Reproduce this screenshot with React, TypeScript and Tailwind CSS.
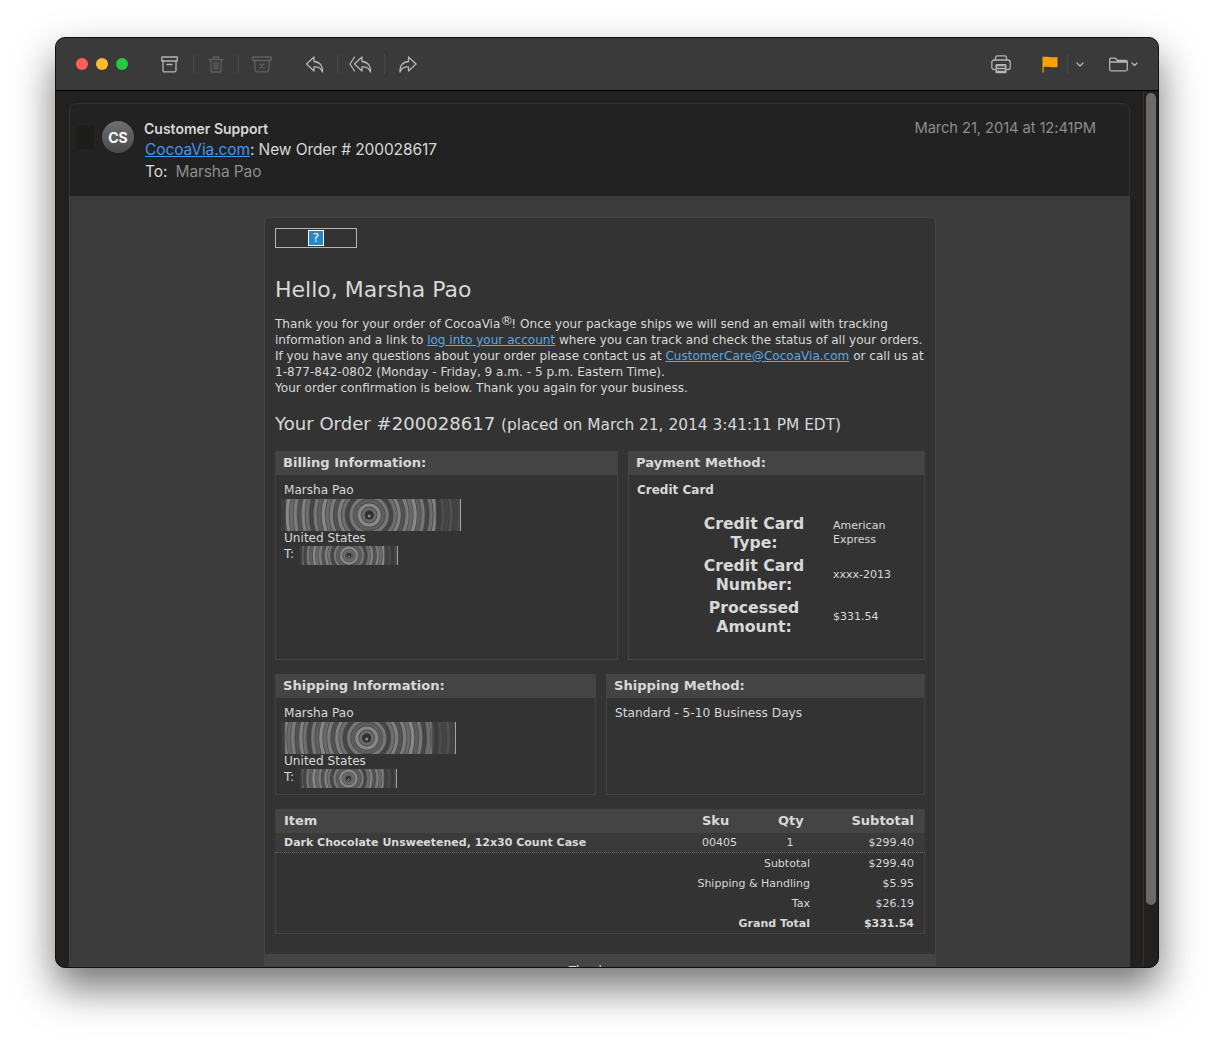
import type { ReactNode } from "react";

const Sep = ({ ml }: { ml: string }) => <div className={`h-5 w-px bg-[#4a4a4a] ${ml}`} />;

function Icon({ w, h, className, children }: { w: number; h: number; className: string; children: ReactNode }) {
  return (
    <svg width={w} height={h} viewBox={`0 0 ${w} ${h}`} fill="none" stroke="currentColor" strokeWidth="1.3" strokeLinejoin="round" strokeLinecap="round" className={className}>
      {children}
    </svg>
  );
}

const ReplyPath = "M9 1 L1.5 8 L9 15 V11 C13 10.5 16 12 17.5 16 C18 10 15 6 9 5.5 Z";
const ForwardPath = "M9.5 1 L17 8 L9.5 15 V11 C5.5 10.5 2.5 12 1 16 C0.5 10 3.5 6 9.5 5.5 Z";

function Toolbar() {
  return (
    <div className="flex h-[53px] shrink-0 items-center border-b border-black bg-[#3a3a3a] pl-5 text-[#b5b5b5]">
      <div className="flex gap-2">
        <div className="h-3 w-3 rounded-full bg-[#ff5f57]" />
        <div className="h-3 w-3 rounded-full bg-[#febc2e]" />
        <div className="h-3 w-3 rounded-full bg-[#28c840]" />
      </div>
      <Icon w={17} h={17} className="ml-[33px]">
        <rect x="0.7" y="1" width="15.6" height="4" rx="0.6" />
        <path d="M2 5 V14.5 A1.3 1.3 0 0 0 3.3 15.8 H13.7 A1.3 1.3 0 0 0 15 14.5 V5 M6 8.5 H11" />
      </Icon>
      <Sep ml="ml-[15px]" />
      <Icon w={16} h={17} className="ml-[14px] text-[#5f5f5f]">
        <path d="M1 3.5 H15 M5.5 3.5 V1 H10.5 V3.5 M2.5 3.5 L3.3 16 H12.7 L13.5 3.5 M6 6.5 V13.5 M8 6.5 V13.5 M10 6.5 V13.5" />
      </Icon>
      <Sep ml="ml-[14px]" />
      <Icon w={20} h={17} className="ml-[13px] text-[#5f5f5f]">
        <rect x="0.7" y="1" width="18.6" height="3.5" rx="0.8" />
        <path d="M2.5 4.5 L3.5 14.5 A1.5 1.5 0 0 0 5 15.8 H15 A1.5 1.5 0 0 0 16.5 14.5 L17.5 4.5 M8 8 L12 12 M12 8 L8 12" />
      </Icon>
      <Icon w={19} h={17} className="ml-[33px]">
        <path d={ReplyPath} />
      </Icon>
      <Sep ml="ml-[13px]" />
      <Icon w={23} h={17} className="ml-[11px]">
        <path d="M5.5 1 L1 8 L5.5 15" />
        <path d="M13 1 L5.5 8 L13 15 V11 C17 10.5 20 12 21.5 16 C22 10 19 6 13 5.5 Z" />
      </Icon>
      <Sep ml="ml-[12px]" />
      <Icon w={19} h={17} className="ml-[14px]">
        <path d={ForwardPath} />
      </Icon>
      <Icon w={20} h={19} className="ml-[573px]">
        <path d="M4.5 5 V2.5 A1.8 1.8 0 0 1 6.3 0.8 H13.7 A1.8 1.8 0 0 1 15.5 2.5 V5" />
        <path d="M4 14.5 H3 A2.2 2.2 0 0 1 0.8 12.3 V7.5 A2.5 2.5 0 0 1 3.3 5 H16.7 A2.5 2.5 0 0 1 19.2 7.5 V12.3 A2.2 2.2 0 0 1 17 14.5 H16" />
        <rect x="4.5" y="9" width="11" height="9.2" rx="1.2" fill="#b5b5b5" stroke="none" />
        <path d="M6.5 12 H13.5 M6.5 15 H13.5" stroke="#3a3a3a" />
      </Icon>
      <svg width="16" height="17" viewBox="0 0 16 17" className="ml-[31px] text-[#ff9f0a]">
        <path d="M0.5 0.5 H1.7 V16.5 H0.5 Z M1.7 1 C5 0 8 2 15.5 1 V11 C9 12 5 10 1.7 11 Z" fill="currentColor" />
      </svg>
      <Sep ml="ml-[9px]" />
      <Icon w={8} h={5} className="ml-[8px]">
        <path d="M1 1 L4 4 L7 1" />
      </Icon>
      <Icon w={19} h={15} className="ml-[25px]">
        <path d="M0.7 3 A1.5 1.5 0 0 1 2.2 1.2 H6.5 L8.5 3.5 H16.8 A1.5 1.5 0 0 1 18.3 5 V12.3 A1.5 1.5 0 0 1 16.8 13.8 H2.2 A1.5 1.5 0 0 1 0.7 12.3 Z M0.7 5 H18.3" />
      </Icon>
      <Icon w={7} h={5} className="ml-[3px]">
        <path d="M1 1 L3.5 3.5 L6 1" />
      </Icon>
    </div>
  );
}

const ringShades = ["#7c7c7c", "#6a6a6a", "#888888", "#5e5e5e", "#767676", "#454545", "#6e6e6e", "#808080", "#525252"];

// the scrambled address blocks in the mail are ring-shaped smears
function Rings({ w, h, cx, step }: { w: number; h: number; cx: number; step: number }) {
  const radii = Array.from({ length: Math.ceil(w / step) }, (_, i) => i * step + 2);
  return (
    <svg width={w} height={h} viewBox={`0 0 ${w} ${h}`} className="block">
      <rect width={w} height={h} fill="#4a4a4a" />
      {radii.map((r, i) => (
        <circle key={r} cx={cx} cy={h / 2} r={r} fill="none" strokeWidth={step * 0.8} stroke={ringShades[i % ringShades.length]} />
      ))}
      <circle cx={cx} cy={h / 2} r={h * 0.14} fill="#2f2f2f" />
      <circle cx={cx} cy={h / 2 + 1} r={h * 0.05} fill="#8a8a8a" />
      <rect x="0" y="0" width={w * 0.025} height={h} fill="#333333" opacity="0.75" />
      <rect x={w * 0.86} y="0" width={w * 0.14} height={h} fill="#333333" opacity="0.65" />
      <rect x={w - 1} y="0" width="1" height={h} fill="#bbbbbb" opacity="0.8" />
    </svg>
  );
}

function Box({ title, className, children }: { title: string; className: string; children: ReactNode }) {
  return (
    <div className={`flex flex-col border border-[#444444] ${className}`}>
      <div className="mx-[-1px] mt-[-1px] h-6 bg-[#444444] pl-2 text-[13.1px] leading-[23px] font-bold">{title}</div>
      {children}
    </div>
  );
}

function Address({ w, ph }: { w: number; ph: number }) {
  return (
    <div className="pt-[7px] pl-2 text-[12.1px] leading-4">
      <div>Marsha Pao</div>
      <div className="-ml-[3px] pt-px">
        <Rings w={w} h={32} cx={w * 0.49} step={4} />
      </div>
      <div className="-mt-px">United States</div>
      <div className="flex items-start">
        T:
        <div className="ml-[6px]">
          <Rings w={ph} h={19} cx={ph / 2} step={3} />
        </div>
      </div>
    </div>
  );
}

const cardRows = [
  { label: ["Credit Card", "Type:"], value: ["American", "Express"] },
  { label: ["Credit Card", "Number:"], value: ["xxxx-2013"] },
  { label: ["Processed", "Amount:"], value: ["$331.54"] },
];

const totals = [
  { label: "Subtotal", value: "$299.40" },
  { label: "Shipping & Handling", value: "$5.95" },
  { label: "Tax", value: "$26.19" },
  { label: "Grand Total", value: "$331.54", bold: true },
];

function Email() {
  return (
    <div className="mt-[21px] ml-[194px] w-[672px] border border-[#444444] bg-[#333333] px-[10px] pt-[10px] text-[#d8d8d8] font-['DejaVu_Sans',sans-serif]">
      <div className="flex h-5 w-[82px] justify-center border border-[#b5b5b5] pt-px">
        <div className="h-4 w-4 border border-white bg-[#2b86c5] text-center text-[12px] leading-[14px] text-white">?</div>
      </div>
      <h1 className="mt-[27px] text-[22px] leading-[30px]">Hello, Marsha Pao</h1>
      <p className="mt-[11px] text-[12.05px] leading-4">
        Thank you for your order of CocoaVia<sup className="mr-[-2px] -top-[3px] text-[13px] leading-none">®</sup>! Once your package ships we will send an email with tracking
        <br />
        information and a link to <a className="text-[#5aa9e6] underline">log into your account</a> where you can track and check the status of all your orders.
        <br />
        If you have any questions about your order please contact us at <a className="text-[#5aa9e6] underline">CustomerCare@CocoaVia.com</a> or call us at
        <br />
        1-877-842-0802 (Monday - Friday, 9 a.m. - 5 p.m. Eastern Time).
        <br />
        Your order confirmation is below. Thank you again for your business.
      </p>
      <h2 className="mt-[16px] text-[18.1px] leading-6">
        Your Order #200028617 <span className="text-[15.4px]">(placed on March 21, 2014 3:41:11 PM EDT)</span>
      </h2>

      <div className="mt-[14px] flex gap-[10px]">
        <Box title="Billing Information:" className="h-[209px] w-[343px]">
          <Address w={180} ph={98} />
        </Box>
        <Box title="Payment Method:" className="h-[209px] w-[297px]">
          <div className="pt-[7px] pl-2 text-[12px] leading-4 font-bold">Credit Card</div>
          <div className="mt-[16px] ml-[51px] grid grid-cols-[148px_1fr] gap-x-[5px]">
            {cardRows.map((row) => (
              <div key={row.label[0] + row.label[1]} className="contents">
                <div className="h-[42px] text-center text-[15.7px] leading-[19px] font-bold">
                  {row.label[0]}
                  <br />
                  {row.label[1]}
                </div>
                <div className="flex h-[38px] flex-col justify-center text-[11px] leading-[14px]">
                  {row.value.map((v) => (
                    <div key={v}>{v}</div>
                  ))}
                </div>
              </div>
            ))}
          </div>
        </Box>
      </div>

      <div className="mt-[14px] flex gap-[10px]">
        <Box title="Shipping Information:" className="h-[121px] w-[321px]">
          <Address w={175} ph={97} />
        </Box>
        <Box title="Shipping Method:" className="h-[121px] w-[319px]">
          <div className="pt-[7px] pl-2 text-[12.2px] leading-4">Standard - 5-10 Business Days</div>
        </Box>
      </div>

      <div className="mt-[14px] border border-[#444444]">
        <div className="mx-[-1px] mt-[-1px] grid h-6 grid-cols-[418px_76px_24px_1fr] items-center bg-[#444444] pr-[11px] pl-[9px] text-[13px] font-bold">
          <div>Item</div>
          <div>Sku</div>
          <div className="text-center">Qty</div>
          <div className="text-right">Subtotal</div>
        </div>
        <div className="mx-[-1px] grid h-[20px] grid-cols-[418px_76px_24px_1fr] items-center border-b border-dotted border-[#666666] bg-[#3a3a3a] pt-[2px] pr-[11px] pl-[9px] text-[11px]">
          <div className="font-bold whitespace-nowrap">Dark Chocolate Unsweetened, 12x30 Count Case</div>
          <div>00405</div>
          <div className="text-center">1</div>
          <div className="text-right">$299.40</div>
        </div>
        {totals.map((row) => (
          <div key={row.label} className={`flex h-5 items-center justify-end pt-[2px] pr-[10px] text-[11px] ${row.bold ? "font-bold" : ""}`}>
            <div>{row.label}</div>
            <div className="w-[104px] text-right">{row.value}</div>
          </div>
        ))}
      </div>

      <div className="mx-[-10px] mt-[20px] h-10 bg-[#444444] pt-[9px] text-center text-[12px] leading-4">Thank you</div>
    </div>
  );
}

export default function App() {
  return (
    <div className="h-[1041px] w-[1214px] overflow-hidden bg-white pt-[37px] pl-[55px]">
      <div className="flex h-[931px] w-[1104px] flex-col overflow-hidden rounded-[10px] border border-[#111111] bg-[#222120] font-['Inter',sans-serif] shadow-[0_20px_40px_rgba(0,0,0,0.55)]">
        <Toolbar />
        <div className="flex min-h-0 flex-1">
          <div className="ml-[13px] flex w-[1061px] shrink-0 flex-col pt-[12px]">
            <div className="relative flex h-[93px] shrink-0 rounded-t-[8px] border-x border-t border-[#303030] bg-[#222222] pt-[17px] pl-[32px]">
              <div className="absolute top-[21px] left-[6px] h-6 w-[18px] bg-[#1d1d1c]" />
              <div className="flex h-8 w-8 items-center justify-center rounded-full bg-gradient-to-b from-[#6f6f6f] to-[#4a4a4a] text-[14px] font-bold text-white">CS</div>
              <div className="ml-[10px] -mt-[3px] flex flex-1 flex-col text-[#d8d8d8]">
                <div className="flex h-[21px] items-center justify-between pr-[33px]">
                  <div className="text-[14px] font-semibold">Customer Support</div>
                  <div className="text-[14.75px] tracking-[-0.1px] text-[#8c8c8c]">March 21, 2014 at 12:41PM</div>
                </div>
                <div className="h-[22px] pl-px text-[15.5px] leading-[22px] tracking-[-0.1px]">
                  <a className="text-[#3f97f0] underline">CocoaVia.com</a>: New Order # 200028617
                </div>
                <div className="h-[22px] pl-px text-[15.5px] leading-[22px] tracking-[-0.1px]">
                  To: <span className="ml-1 text-[#8c8c8c]">Marsha Pao</span>
                </div>
              </div>
            </div>
            <div className="min-h-0 flex-1 overflow-hidden border-x border-[#414141] bg-[#3b3b3b]">
              <Email />
            </div>
          </div>
          <div className="ml-[13px] flex h-full w-[15px] justify-center border-l border-[#333333] pt-[2px]">
            <div className="h-[812px] w-[10px] rounded-full bg-[#6b6b6b]" />
          </div>
        </div>
      </div>
    </div>
  );
}
